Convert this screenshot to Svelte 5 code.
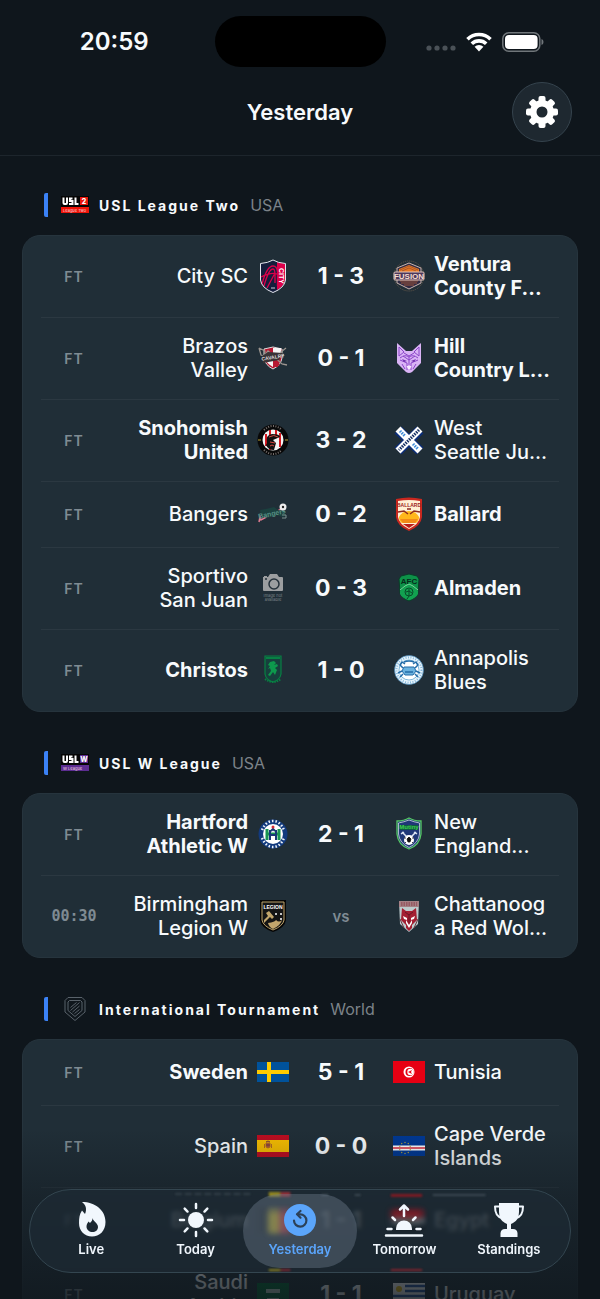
<script lang="ts">
	type Team = {
		name: string;
		crest: string;
		winner?: boolean;
	};

	type Match = {
		status: string;
		home: Team;
		away: Team;
		score?: string;
	};

	type League = {
		name: string;
		country: string;
		logo: string;
		matches: Match[];
	};

	const leagues: League[] = [
		{
			name: 'USL League Two',
			country: 'USA',
			logo: 'usl2',
			matches: [
				{
					status: 'FT',
					score: '1 - 3',
					home: { name: 'City SC', crest: 'city' },
					away: { name: 'Ventura\nCounty F...', crest: 'fusion', winner: true }
				},
				{
					status: 'FT',
					score: '0 - 1',
					home: { name: 'Brazos\nValley', crest: 'brazos' },
					away: { name: 'Hill\nCountry L...', crest: 'wolf', winner: true }
				},
				{
					status: 'FT',
					score: '3 - 2',
					home: { name: 'Snohomish\nUnited', crest: 'snohomish', winner: true },
					away: { name: 'West\nSeattle Ju...', crest: 'junction' }
				},
				{
					status: 'FT',
					score: '0 - 2',
					home: { name: 'Bangers', crest: 'bangers' },
					away: { name: 'Ballard', crest: 'ballard', winner: true }
				},
				{
					status: 'FT',
					score: '0 - 3',
					home: { name: 'Sportivo\nSan Juan', crest: 'missing' },
					away: { name: 'Almaden', crest: 'almaden', winner: true }
				},
				{
					status: 'FT',
					score: '1 - 0',
					home: { name: 'Christos', crest: 'christos', winner: true },
					away: { name: 'Annapolis\nBlues', crest: 'annapolis' }
				}
			]
		},
		{
			name: 'USL W League',
			country: 'USA',
			logo: 'uslw',
			matches: [
				{
					status: 'FT',
					score: '2 - 1',
					home: { name: 'Hartford\nAthletic W', crest: 'hartford', winner: true },
					away: { name: 'New\nEngland...', crest: 'mutiny' }
				},
				{
					status: '00:30',
					home: { name: 'Birmingham\nLegion W', crest: 'legion' },
					away: { name: 'Chattanoog\na Red Wol...', crest: 'redwolves' }
				}
			]
		},
		{
			name: 'International Tournament',
			country: 'World',
			logo: 'shield',
			matches: [
				{
					status: 'FT',
					score: '5 - 1',
					home: { name: 'Sweden', crest: 'sweden', winner: true },
					away: { name: 'Tunisia', crest: 'tunisia' }
				},
				{
					status: 'FT',
					score: '0 - 0',
					home: { name: 'Spain', crest: 'spain' },
					away: { name: 'Cape Verde\nIslands', crest: 'capeverde' }
				},
				{
					status: 'FT',
					score: '1 - 1',
					home: { name: 'Belgium', crest: 'belgium' },
					away: { name: 'Egypt', crest: 'egypt' }
				},
				{
					status: 'FT',
					score: '1 - 1',
					home: { name: 'Saudi\nArabia', crest: 'saudi' },
					away: { name: 'Uruguay', crest: 'uruguay' }
				}
			]
		}
	];

	const tabs = ['Live', 'Today', 'Yesterday', 'Tomorrow', 'Standings'];
	const rays = [0, 45, 90, 135, 180, 225, 270, 315];
	const stars = [0, 36, 72, 108, 144, 180, 216, 252, 288, 324];

	let active = $state('Yesterday');
</script>

{#snippet leagueLogo(id: string)}
	<svg class="league-logo" viewBox="0 0 28 28" aria-hidden="true">
		{#if id === 'shield'}
			<g fill="none" stroke="#59626a" stroke-width="1">
				<path d="M7 2.500h14l3 3v11.500L14 25.500 4 17V5.500z" />
				<path d="M8.500 5.500h11l1.500 1.500v8.500L14 21.500 7 15.500V7z" />
				<path d="M9.500 12.500l6-5M9.500 15.500l9-8M11.500 17l7-6M13.500 18.500l5-4" />
			</g>
		{:else}
			<rect y="5" width="28" height="11" fill="#050505" />
			<rect x="19" y="6" width="8" height="8" fill={id === 'usl2' ? '#e8170c' : '#5c2d91'} />
			<rect y="16" width="28" height="6" fill={id === 'usl2' ? '#f01408' : '#5c2d91'} />
			<g fill="none" stroke="#fff" stroke-width="2">
				<path d="M2.500 6.500v5.500q0 1 1 1h1.500q1 0 1-1V6.500M11.500 7.500h-2.500v2.500h2.500v3H8M14.500 6.500V13h3" />
			</g>
			<text x="23" y="13" class="logo-mark">{id === 'usl2' ? '2' : 'W'}</text>
			<text x="2" y="21" class="logo-sub">{id === 'usl2' ? 'League Two' : 'W League'}</text>
		{/if}
	</svg>
{/snippet}

{#snippet crest(id: string)}
	<svg class="crest" viewBox="0 0 32 32" aria-hidden="true">
		{#if id === 'city'}
			<path d="M16 0Q21 3 28.500 3.500V20Q27.500 28 16 32.500 4.500 28 3.500 20V3.500Q11 3 16 0z" fill="#141d3c" />
			<path d="M20 2Q24 3.300 28 3.500V20Q27 26 20 30z" fill="#dd004a" />
			<path d="M5 24C8 13 11 6 16 6q4 0 4.500 6v14M7 26C10 15 13 9 16 9q2 0 2 6v8M10 28l8-15M4 17q10-5 16-3" fill="none" stroke="#dd004a" stroke-width="1.300" />
			<path d="M16 0Q21 3 28.500 3.500V20Q27.500 28 16 32.500 4.500 28 3.500 20V3.500Q11 3 16 0z" fill="none" stroke="#e4e6ef" />
			<text class="mark" font-size="7" fill="#fff" transform="translate(22 8) rotate(90)">CITY</text>
			<path d="M14 28h4" stroke="#c9cdd8" />
		{:else if id === 'fusion'}
			<circle cx="16" cy="16" r="15" fill="none" stroke="#65584a" stroke-width="1" stroke-dasharray="1 1" />
			<path d="M16 3l12 5v15l-12 6-12-6V8z" fill="#302b45" stroke="#c8b4ae" />
			<path d="M16 5l10 4v3H6V9z" fill="#e87722" />
			<path d="M7 10l9-4 9 4M9 11l7-3 7 3" fill="none" stroke="#8d4a2f" stroke-width=".7" />
			<path d="M7 21h18M8 23h16M11 25h10" stroke="#9c5438" stroke-width="1" />
			<rect x="1" y="12" width="30" height="8" rx="1" fill="#4c395c" stroke="#e2c7bd" />
			<text class="mark middle" x="16" y="19" font-size="8" fill="#f6dcd0">FUSION</text>
		{:else if id === 'brazos'}
			<path d="M7 7l9-2 9 2v9q-1 7-9 11-8-4-9-11z" fill="#b71932" stroke="#ddd" />
			<path d="M16 6h8v9h-8zM8 16h8v9q-7-4-8-9z" fill="#f4f4f4" />
			<path d="M2 6l6 3-1 5 4-5 14 13 5 1M2 6l2 7 3 1M29 6l-5 4 3 4" fill="none" stroke="#9c958f" stroke-width="1.300" />
			<path d="M5 14l6-4 15 1-4 7-16 3z" fill="#393437" />
			<text class="mark middle" x="16" y="17" font-size="5" fill="#ddd" transform="rotate(-9 16 16)">CAVALRY</text>
			<path d="M20 20v5M17.500 22.500h5" stroke="#b71932" stroke-width="2" />
		{:else if id === 'wolf'}
			<path d="M4 1l9 8h6l9-8v20l-9 9q-3 2-6 0l-9-9z" fill="#d9b3f5" />
			<g fill="none" stroke="#8a45c8" stroke-width="1">
				<path d="M6 5v9l5-4zM26 5v9l-5-4zM11 11l5 3 5-3M7 16q5-4 9-1 4-3 9 1M7 18l7 3v7M25 18l-7 3v7M9 22l3 5M23 22l-3 5M10 14l6 4 6-4M16 15v8" />
			</g>
			<path d="M9 17l5 2-3 1zM23 17l-5 2 3 1z" fill="#7030b0" />
			<path d="M13.500 24h5l-1.500 3h-2z" fill="#f7eaff" />
		{:else if id === 'snohomish'}
			<circle cx="16" cy="16" r="15.500" fill="#080808" />
			<path d="M7 6q9-8 18 0M7 26q9 8 18 0" fill="none" stroke="#77706e" stroke-width="2" stroke-dasharray="1 1.500" />
			<circle cx="16" cy="16" r="10.500" fill="#f3f3f3" />
			<path d="M9 10v12M13 6v7M19 6v8M23 9v14M13 22v4" stroke="#d71920" stroke-width="2" />
			<path d="M10 19q-2-8 5-9 8 0 8 3l-7 3 3 3-2 7q-6 0-8-5z" fill="#111" />
			<path d="M12 13q5-3 9 0M13 18l5 1M13 22q2-2 4 0" fill="none" stroke="#d5493f" stroke-width="1" />
			<path d="M1 16h3M28 16h3" stroke="#bda431" />
		{:else if id === 'junction'}
			<path d="M5 6l22 21M27 6L5 27" stroke="#0b2d78" stroke-width="10" />
			<path d="M5 5l22 22M27 5L5 27" stroke="#fff" stroke-width="7" />
			<path d="M7 7l5 5M20 20l5 5" stroke="#3f8bd9" stroke-width="3" stroke-dasharray="1.500 1" />
			<path d="M26 6L6 26" stroke="#142e63" stroke-width="3" stroke-dasharray="1.500 1" />
		{:else if id === 'bangers'}
			<path d="M2 24l1-5 1 3 22-12" fill="none" stroke="#df7b91" stroke-width="1.500" />
			<path d="M3 12l6-1 8-2 4 3 5 1 3 4-3 2-7-2-8 3-7-2z" fill="#1b413f" />
			<text class="mark middle" x="15" y="18" font-size="7" fill="#578f83" transform="rotate(-12 15 16)">Bangers</text>
			<circle cx="26" cy="9" r="3.500" fill="#eee" />
			<circle cx="26" cy="9" r="1.200" fill="#222" />
			<path d="M25 17h4v3h-4" fill="none" stroke="#7b9291" />
		{:else if id === 'ballard'}
			<path d="M3 1q13-3 26 0v18q-1 9-13 14Q4 28 3 19z" fill="#c9281f" />
			<path d="M5 3q11-2 22 0v16q-1 7-11 12Q6 26 5 19z" fill="#fff1d5" />
			<path d="M6 19q3-6 10-6t10 6q0 4-3 6H9q-3-2-3-6z" fill="#ffb71b" />
			<path d="M7 21h18l-3 4H10z" fill="#f28a18" />
			<path d="M10 26h12l-6 4z" fill="#b91d1b" />
			<path d="M5 14l6-1 4 3M27 14l-6-1-4 3M14 11h4" fill="none" stroke="#8d2a20" stroke-width="1.500" />
			<text class="mark middle" x="16" y="9" font-size="5" fill="#9e241b">BALLARD</text>
		{:else if id === 'missing'}
			<path d="M6 5h1V4h3v1h1l2-3h7l2 3h3q1 0 1 1v12q0 1-1 1H7q-1 0-1-1z" fill="#9c9ea0" />
			<circle cx="17" cy="12" r="5" fill="#9c9ea0" stroke="#25313a" stroke-width="1.500" />
			<circle cx="9" cy="7" r="1" fill="#25313a" />
			<text class="tiny middle" x="16" y="25" fill="#7d858a">Image not</text>
			<text class="tiny middle" x="16" y="29" fill="#7d858a">available</text>
		{:else if id === 'almaden'}
			<path d="M8 4l8-2 8 2 2 3-1 14q-1 5-9 8-8-3-9-8L6 7z" fill="#0d9148" stroke="#0a3d28" />
			<path d="M7 19l5-4 4-3 4 3 5 4v3q-2 4-9 6-7-2-9-6z" fill="#12a150" />
			<path d="M7 18l5-4 4-2 4 2 5 4" fill="none" stroke="#7bd49b" stroke-width="1" />
			<text class="mark middle" x="16" y="12" font-size="8" fill="#07291a">AFC</text>
			<circle cx="16" cy="20" r="4" fill="none" stroke="#084b29" />
			<path d="M16 17v7l-2 3M13 20l3-1 3 2" fill="none" stroke="#084b29" />
		{:else if id === 'christos'}
			<path d="M8 2h16v18q-1 6-8 8-7-2-8-8z" fill="#17403d" stroke="#078043" stroke-width="1.200" />
			<path d="M9 4h14" stroke="#078043" stroke-width="2" />
			<path d="M13 8l4-1 2 2-2 2 3-1 1 2-3 2 2 2-2 5-2-3-3 4-2-1 3-4-1-3-2 1 2-3-2-1z" fill="#0d9a4d" />
			<path d="M8 25q8 6 16 0" fill="none" stroke="#078043" stroke-dasharray="1.500 1" stroke-width="2" />
		{:else if id === 'annapolis'}
			<circle cx="16" cy="16" r="14.500" fill="#e8f4fb" />
			<circle cx="16" cy="16" r="12.500" fill="none" stroke="#86b9dd" stroke-width="2" stroke-dasharray="1 1.500" />
			<circle cx="16" cy="16" r="10" fill="#fff" stroke="#4e9ccf" stroke-width=".7" />
			<path d="M9 17l2-4h10l2 4-3 4h-8z" fill="#6ab2df" stroke="#246ca8" />
			<path d="M10 14l-3-3 2-3 3 2M22 14l3-3-2-3-3 2M9 17l-4 2M23 17l4 2M10 20l-3 3M22 20l3 3M11 8q5-2 10 0M12 18h8" fill="none" stroke="#246ca8" stroke-width="1.500" />
			<circle cx="16" cy="16" r="14.500" fill="none" stroke="#3c83b8" stroke-width=".7" />
		{:else if id === 'hartford'}
			<circle cx="16" cy="16" r="14.500" fill="#123a7e" />
			<path d="M5 12q4-9 11-9t11 9M5 20q4 9 11 9t11-9" fill="none" stroke="#eef3fa" stroke-width="2.500" stroke-dasharray="1.500 2" />
			<circle cx="16" cy="16" r="10" fill="#fff" />
			<path d="M10 11v11M22 11v11M10 16h12" stroke="#199553" stroke-width="3" />
			<path d="M13 12v10M19 12v10M13 17h6M14 13l2-2 2 2" stroke="#173777" stroke-width="2" fill="none" />
			<circle cx="16" cy="9" r="1.500" fill="#d62935" />
		{:else if id === 'mutiny'}
			<path d="M16 0Q21 3 28 3v13q-1 11-12 15Q5 27 4 16V3q7 0 12-3z" fill="#203878" stroke="#56ca65" stroke-width="1.300" />
			<path d="M16 2q5 2 10.500 3v11q-1 9-10.500 13.500Q6.500 25 5.500 16V5Q11 4 16 2z" fill="none" stroke="#e7eff1" stroke-width=".7" />
			<path d="M7 7h18v5H7z" fill="#0e5c43" />
			<text class="mark middle" x="16" y="11" font-size="6" fill="#40d14f">Mutiny</text>
			<path d="M9 14l6 6M23 14l-6 6M8 16l3-2M24 16l-3-2" stroke="#dfe6f4" stroke-width="1.500" />
			<circle cx="16" cy="22" r="5" fill="#fff" />
			<path d="M14 21l2-2 2 2-1 3h-2zM12 24l1 1M20 24l-1 1M11 20h2M19 20h2" fill="#111" stroke="#111" stroke-width=".8" />
		{:else if id === 'legion'}
			<path d="M3 0h26v20q-1 8-13 12Q4 28 3 20z" fill="#050505" />
			<path d="M5 2h22v18q-1 6-11 10Q6 26 5 20z" fill="#141414" stroke="#bca26a" />
			<text class="mark middle" x="16" y="9" font-size="5" fill="#fff">LEGION</text>
			<path d="M9 13l3-2 5 6-2 2-2-2-6 6v-3l4-4zM11 23q7-1 8-3 3 3 6 0-1 5-9 9-4-2-5-6z" fill="#c3a66c" />
			<path d="M18 14h2M23 14h2M23 19h2" stroke="#fff" stroke-width="1.500" />
		{:else if id === 'redwolves'}
			<path d="M6 1h20l-1 23-9 8-9-8z" fill="#bccacc" />
			<path d="M6 1h20v6H6z" fill="#a58085" />
			<path d="M8 3h16M8 5h16" stroke="#883443" stroke-width="1" stroke-dasharray="1.500 1" />
			<path d="M9 8l4 3h6l4-3 1 12-5 5v3l-3 3-3-3v-3l-5-5z" fill="#a41f32" />
			<path d="M10 16l4 2v2l-3-1zM22 16l-4 2v2l3-1zM13 23l3 5 3-5v-3l-3 5-3-5z" fill="#fff" />
			<path d="M12 12l4 3 4-3M16 15v8" fill="none" stroke="#681626" />
			<path d="M7 19l4 9M25 19l-4 9" stroke="#69363e" />
		{:else if id === 'sweden'}
			<rect y="6" width="32" height="20" fill="#00529b" />
			<path d="M12 6v20M0 16h32" stroke="#fecb00" stroke-width="4" />
		{:else if id === 'tunisia'}
			<rect y="5" width="32" height="22" fill="#e70013" />
			<circle cx="16" cy="16" r="5.500" fill="#fff" />
			<circle cx="16.500" cy="16" r="4" fill="#e70013" />
			<circle cx="17.500" cy="16" r="3.200" fill="#fff" />
			<path d="M15 16l4-2-1 2 1 2z" fill="#e70013" />
		{:else if id === 'spain'}
			<rect y="5" width="32" height="22" fill="#bd0d20" />
			<rect y="10" width="32" height="12" fill="#f6bd00" />
			<path d="M9 13h4v4q-2 2-4 0zM7.500 14v4M14.500 14v4" fill="#a85438" stroke="#b46a24" stroke-width="1" />
			<path d="M9 12q2-2 4 0M9 15h4" stroke="#713b42" fill="none" />
		{:else if id === 'capeverde'}
			<rect y="6" width="32" height="20" fill="#003893" />
			<path d="M0 18h32" stroke="#fff" stroke-width="5" />
			<path d="M0 18h32" stroke="#d72638" stroke-width="1.500" />
			<g fill="#b7a43d">
				{#each stars as angle}
					<circle cx="12" cy="12.500" r=".7" transform="rotate({angle} 12 18)" />
				{/each}
			</g>
		{:else if id === 'belgium'}
			<rect y="3" width="11" height="26" fill="#111" />
			<rect x="11" y="3" width="11" height="26" fill="#fdda24" />
			<rect x="22" y="3" width="10" height="26" fill="#ef3340" />
		{:else if id === 'egypt'}
			<rect y="5" width="32" height="8" fill="#ce1126" />
			<rect y="13" width="32" height="7" fill="#fff" />
			<rect y="20" width="32" height="7" fill="#000" />
			<path d="M14 14h4v5h-4z" fill="#c09300" />
		{:else if id === 'saudi'}
			<rect y="5" width="32" height="22" fill="#006c35" />
			<path d="M9 12h14M9 14h14M10 21h12" stroke="#fff" stroke-width="1.500" />
		{:else if id === 'uruguay'}
			<rect y="5" width="32" height="22" fill="#fff" />
			<path d="M12 8h20M12 13h20M0 18h32M0 23h32" stroke="#2b57a5" stroke-width="2.500" />
			<circle cx="6" cy="11" r="3" fill="#f5c518" />
		{/if}
	</svg>
{/snippet}

{#snippet tabIcon(name: string)}
	<svg class="tab-icon" viewBox="0 0 42 36" aria-hidden="true">
		{#if name === 'Live'}
			<path
				fill="currentColor"
				fill-rule="evenodd"
				d="M12 0C25 0 35.500 8 35.500 20c0 9-6 14.500-13.500 14.500S9 29 9 21c0-5 .5-9 3-12.500l3 3.500C17 7 16 3 12 0zM22.500 16c.5 3.500 5.500 5 5.500 9 0 3-2.500 5-5.500 5s-6-2-6-5.500c0-2 1-3.500 2-5l1.500 1.500c1.800-1.500 2.500-3 2.500-5z"
			/>
		{:else if name === 'Today'}
			<circle cx="21" cy="18" r="8" fill="currentColor" />
			<g stroke="currentColor" stroke-width="2.500" stroke-linecap="round">
				{#each rays as angle}
					<path d="M21 2v4" transform="rotate({angle} 21 18)" />
				{/each}
			</g>
		{:else if name === 'Yesterday'}
			<circle cx="21" cy="18" r="16" fill="currentColor" />
			<g fill="none" stroke="#2c4158" stroke-width="2.200" stroke-linecap="round" stroke-linejoin="round">
				<path d="M15 18.500a6.200 6.200 0 1 0 6-6.200h-2.500" />
				<path d="M21.500 9l-3.500 3.300 3.500 3.400" />
			</g>
		{:else if name === 'Tomorrow'}
			<path d="M13 28v-1.500a8 8 0 0 1 16 0V28z" fill="currentColor" />
			<g fill="none" stroke="currentColor" stroke-width="2.500" stroke-linecap="round" stroke-linejoin="round">
				<path d="M21 14V4M17 7.500l4-4 4 4M9.500 15.500l2.500 2.500M32.500 15.500L30 18M4.500 27h4M33.500 27h4M3 33.500h36" />
			</g>
		{:else}
			<path d="M11 1h20v9q0 8-6 11l-2 1v5h2q4 0 4.500 4v4h-17v-4q.5-4 4.500-4h2v-5l-2-1q-6-3-6-11z" fill="currentColor" />
			<path d="M12 4.500H7q0 10 7 11.500M30 4.500h5q0 10-7 11.500" fill="none" stroke="currentColor" stroke-width="2" stroke-linejoin="round" />
		{/if}
	</svg>
{/snippet}

<div class="app">
	<div class="status-bar">
		<span class="clock">20:59</span>
		<div class="island"></div>
		<div class="indicators">
			<svg class="signal" viewBox="0 0 30 20" aria-hidden="true">
				<g fill="#4a5157">
					<circle cx="3" cy="16" r="2.600" />
					<circle cx="11" cy="16" r="2.600" />
					<circle cx="19" cy="16" r="2.600" />
					<circle cx="27" cy="16" r="2.600" />
				</g>
			</svg>
			<svg class="wifi" viewBox="0 0 26 20" aria-hidden="true">
				<g fill="none" stroke="#fff" stroke-width="3.600">
					<path d="M1.500 7.200a16.500 16.500 0 0 1 23 0" />
					<path d="M5.800 11.800a10.300 10.300 0 0 1 14.400 0" />
				</g>
				<path d="M8.600 14.800a6.200 6.200 0 0 1 8.800 0L13 19.500z" fill="#fff" />
			</svg>
			<svg class="battery" viewBox="0 0 42 20" aria-hidden="true">
				<rect x=".8" y=".8" width="37" height="18.400" rx="6" fill="none" stroke="#70767a" stroke-width="1.500" />
				<rect x="3" y="3" width="32.600" height="14" rx="4" fill="#fff" />
				<path d="M39.500 7q2 .5 2 3t-2 3z" fill="#70767a" />
			</svg>
		</div>
	</div>

	<header>
		<h1>Yesterday</h1>
		<button class="settings" aria-label="Settings">
			<svg viewBox="0 0 32 32" aria-hidden="true">
				<g fill="#fff">
					{#each rays as angle}
						<rect x="12.500" y="0" width="7" height="10" rx="2" transform="rotate({angle} 16 16)" />
					{/each}
				</g>
				<circle cx="16" cy="16" r="8.500" fill="none" stroke="#fff" stroke-width="7" />
				<circle cx="16" cy="16" r="5.500" fill="#1e2830" />
			</svg>
		</button>
	</header>

	<main>
		{#each leagues as league}
			<section>
				<h2>
					{@render leagueLogo(league.logo)}
					<span class="league-name">{league.name}</span>
					<span class="country">{league.country}</span>
				</h2>
				<div class="card">
					{#each league.matches as match}
						<div class="match">
							<span class="status" class:kickoff={!match.score}>{match.status}</span>
							<span class="team home" class:winner={match.home.winner}>{match.home.name}</span>
							{@render crest(match.home.crest)}
							{#if match.score}
								<span class="score">{match.score}</span>
							{:else}
								<span class="score versus">vs</span>
							{/if}
							{@render crest(match.away.crest)}
							<span class="team" class:winner={match.away.winner}>{match.away.name}</span>
						</div>
					{/each}
				</div>
			</section>
		{/each}
	</main>

	<div class="fade"></div>

	<nav>
		<!-- flag colours caught in the glass -->
		<svg class="glass" viewBox="0 0 542 84" preserveAspectRatio="xMidYMid meet" aria-hidden="true">
			<g class="soft">
				<path d="M239 22h11v22h-11z" fill="#b8a51c" />
				<path d="M250 22h11v22h-11z" fill="#b8323a" />
				<path d="M364 21h32v7h-32z" fill="#a3161f" />
				<path d="M364 29h32v6h-32z" fill="#7d858a" opacity=".5" />
			</g>
			<g class="edge">
				<path d="M143 4h78" stroke="#5b666e" stroke-width="2" stroke-dasharray="7 3" opacity=".5" />
				<path d="M293 5h7M327 5h6M407 5h54" stroke="#75808a" stroke-width="2" opacity=".5" />
				<path d="M239 2h12v5h-12z" fill="#b8a51c" />
				<path d="M251 2h10v5h-10z" fill="#b8323a" />
				<path d="M364 4h32v3h-32z" fill="#a3161f" />
				<path d="M239 81h12v2h-12z" fill="#b8a51c" />
				<path d="M251 81h10v2h-10zM364 81h32v2h-32z" fill="#a3262f" />
			</g>
		</svg>
		{#each tabs as tab}
			<button class="tab" class:active={active === tab} onclick={() => (active = tab)}>
				{@render tabIcon(tab)}
				<span>{tab}</span>
			</button>
		{/each}
	</nav>
</div>

<style>
	:global(body) {
		margin: 0;
		background: #0f161c;
	}
	.app {
		position: relative;
		display: flex;
		flex-direction: column;
		height: 100vh;
		overflow: hidden;
		background: #0f161c;
		color: #f7fafc;
		font-family: Inter, 'Liberation Sans', sans-serif;
	}
	button {
		border: 0;
		padding: 0;
		background: none;
		color: inherit;
		font: inherit;
		cursor: pointer;
	}
	.status-bar {
		display: grid;
		grid-template-columns: 1fr 171px 1fr;
		align-items: center;
		padding: 16px 0 15px;
	}
	.clock {
		padding-left: 14px;
		text-align: center;
		font-size: 24px;
		font-weight: 600;
	}
	.island {
		height: 51px;
		border-radius: 26px;
		background: #000;
	}
	.indicators {
		display: flex;
		align-items: center;
		gap: 10px;
		padding-left: 40px;
	}
	.signal {
		width: 30px;
		height: 20px;
	}
	.wifi {
		width: 26px;
		height: 20px;
	}
	.battery {
		width: 42px;
		height: 20px;
	}
	header {
		display: grid;
		grid-template-columns: 60px 1fr 60px;
		align-items: center;
		padding: 0 28px 13px;
		border-bottom: 1px solid #1d252c;
	}
	h1 {
		grid-column: 2;
		margin: 0;
		text-align: center;
		font-size: 22px;
		font-weight: 600;
	}
	.settings {
		display: grid;
		place-items: center;
		box-sizing: border-box;
		width: 60px;
		height: 60px;
		border: 1px solid #35434d;
		border-radius: 50%;
		background: #1e2830;
	}
	.settings svg {
		width: 32px;
		height: 32px;
	}
	main {
		flex: 1;
		min-height: 0;
		padding: 37px 22px 0;
		overflow-y: auto;
		scrollbar-width: none;
	}
	section {
		margin-bottom: 39px;
	}
	h2 {
		display: flex;
		align-items: center;
		height: 24px;
		margin: 0 0 18px 22px;
		border-left: 4px solid #3b82f6;
		border-radius: 2px;
		font-size: 14px;
	}
	.league-logo {
		width: 28px;
		height: 28px;
		margin: 0 10px 0 13px;
	}
	.logo-mark {
		font-size: 7px;
		font-weight: 800;
		fill: #fff;
		text-anchor: middle;
	}
	.logo-sub {
		font-size: 4px;
		font-weight: 400;
		fill: #f3d5df;
	}
	.league-name {
		font-weight: 700;
		letter-spacing: 2px;
	}
	.country {
		margin-left: 10px;
		color: #7c8389;
		font-size: 16px;
		font-weight: 400;
	}
	.card {
		padding: 0 18px;
		border: 1px solid #26343d;
		border-radius: 18px;
		background: #202e37;
	}
	.match {
		display: flex;
		align-items: center;
		box-sizing: border-box;
		padding: 16px 0 17px;
		border-bottom: 1px solid #2b3841;
	}
	.match:last-child {
		border-bottom: 0;
	}
	.status {
		flex: none;
		width: 66px;
		margin-right: 25px;
		color: #7f8b93;
		text-align: center;
		font-size: 14px;
		font-weight: 600;
		letter-spacing: 1px;
	}
	.kickoff {
		font-family: 'DejaVu Sans Mono', monospace;
		font-size: 15px;
		font-weight: 700;
		letter-spacing: 0;
	}
	.team {
		flex: 1;
		margin: 0 9px;
		font-size: 20px;
		font-weight: 500;
		line-height: 24px;
		white-space: pre;
	}
	.home {
		margin-left: 0;
		text-align: right;
	}
	.winner {
		font-weight: 700;
	}
	.crest {
		flex: none;
		width: 32px;
		height: 32px;
		overflow: visible;
	}
	.mark {
		font-family: 'Liberation Sans', sans-serif;
		font-weight: 700;
	}
	.middle {
		text-anchor: middle;
	}
	.tiny {
		font-size: 4px;
	}
	.score {
		flex: none;
		width: 104px;
		text-align: center;
		font-size: 23px;
		font-weight: 700;
	}
	.versus {
		color: #7f8b93;
		font-size: 15px;
		font-weight: 600;
	}
	.fade {
		position: absolute;
		inset: auto 0 0;
		height: 170px;
		background: linear-gradient(rgba(15, 22, 28, 0), rgba(15, 22, 28, 0.4) 40%, rgba(15, 22, 28, 0.8));
		pointer-events: none;
	}
	nav {
		position: absolute;
		inset: auto 29px 26px;
		display: flex;
		box-sizing: border-box;
		padding: 4px 9px;
		border: 1px solid #344650;
		border-radius: 42px;
		background: rgba(30, 43, 52, 0.7);
		backdrop-filter: blur(2px);
	}
	.glass {
		position: absolute;
		inset: 0;
		width: 100%;
		height: 100%;
		opacity: 0.75;
		pointer-events: none;
	}
	.soft {
		filter: blur(3px);
	}
	.edge {
		filter: blur(1px);
	}
	.tab {
		position: relative;
		display: flex;
		flex: 1;
		flex-direction: column;
		align-items: center;
		gap: 3px;
		margin: 0 -5px;
		padding: 8px 0 11px;
		border-radius: 37px;
		color: #f1f7fd;
		font-size: 13px;
		font-weight: 600;
		line-height: 16px;
	}
	.active {
		background: rgba(110, 125, 140, 0.42);
		color: #5ba5fb;
	}
	.tab-icon {
		width: 42px;
		height: 36px;
	}
</style>
